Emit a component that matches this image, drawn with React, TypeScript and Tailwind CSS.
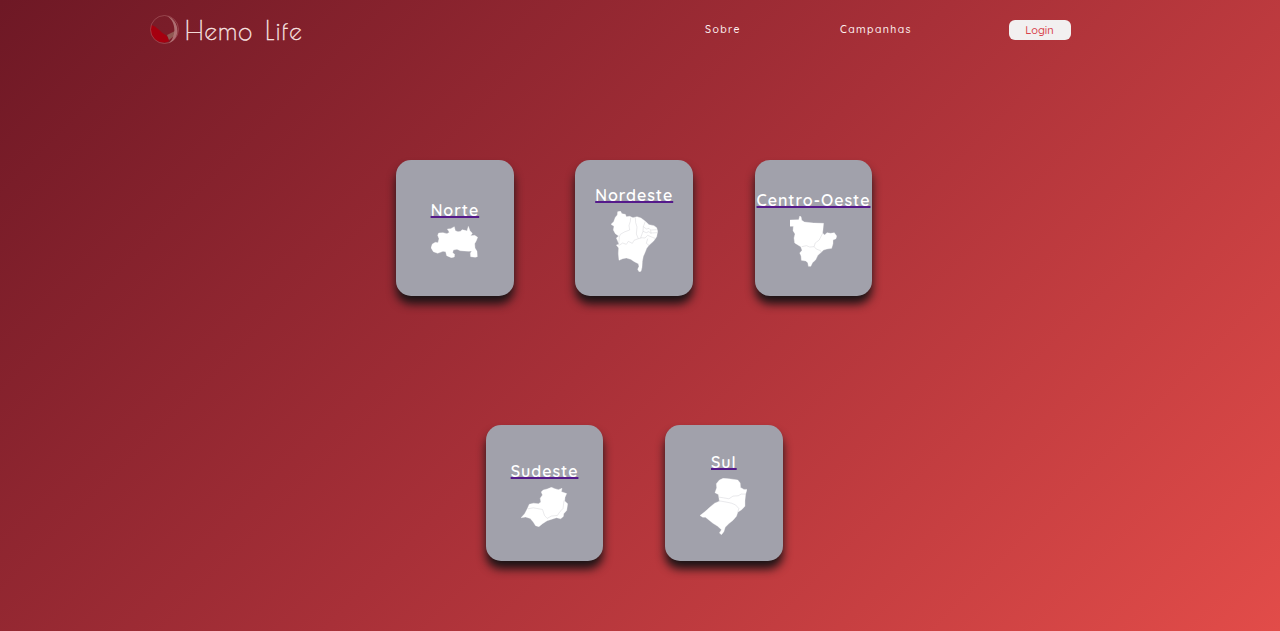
import React from "react";

type Region = {
  name: string;
  width: number;
  height: number;
  viewBox: string;
  outline: string;
  borders: string;
};

const rows: Region[][] = [
  [
    {
      name: "Norte",
      width: 47,
      height: 32,
      viewBox: "138 226 141 96",
      outline:
        "M138 291 L142 280 L151 275 L159 276 L162 264 L158 254 L161 247 L174 246 L186 249 L193 245 L187 235 L197 234 L208 228 L211 240 L219 243 L227 242 L231 237 L240 239 L246 241 L250 227 L255 240 L262 248 L257 255 L269 254 L278 260 L274 270 L269 279 L270 292 L276 302 L277 318 L271 320 L257 318 L256 308 L260 301 L251 302 L226 300 L216 296 L205 298 L203 306 L209 311 L208 319 L199 321 L185 315 L182 303 L174 302 L158 308 L145 303 Z",
      borders: "",
    },
    {
      name: "Nordeste",
      width: 47,
      height: 61,
      viewBox: "138 182 141 183",
      outline:
        "M138 222 L146 214 L151 201 L157 194 L158 184 L166 182 L171 190 L181 192 L184 199 L194 198 L204 202 L216 199 L228 203 L241 213 L252 223 L267 226 L275 232 L278 243 L275 259 L266 272 L252 285 L245 294 L241 304 L235 318 L232 333 L231 351 L228 363 L222 364 L218 357 L222 348 L220 340 L208 334 L197 327 L184 323 L173 325 L162 330 L160 310 L161 293 L154 284 L162 282 L157 270 L154 263 L161 257 L151 250 L145 239 L147 228 Z",
      borders:
        "M197 202 L196 213 L192 225 L194 239 L178 245 L166 252 L163 260 L161 282 M211 202 L212 217 L216 230 L214 251 L220 265 L207 270 L202 279 L190 273 L184 282 L173 278 L161 286 M241 213 L235 229 L244 236 L252 234 L257 239 L275 238 M235 229 L234 243 L244 247 L251 244 L257 248 L276 247 M234 243 L227 262 L240 263 L248 255 L262 261 L270 264 M220 265 L229 263 M248 265 L244 279 L252 285 M257 239 L258 250",
    },
    {
      name: "Centro-Oeste",
      width: 47,
      height: 51,
      viewBox: "135 198 140 153",
      outline:
        "M135 210 L161 209 L164 198 L168 200 L170 211 L178 216 L205 219 L235 220 L233 241 L232 249 L238 255 L245 248 L256 250 L267 248 L274 258 L272 266 L263 270 L263 281 L259 295 L245 297 L235 300 L228 307 L218 316 L211 330 L202 338 L197 349 L190 349 L188 338 L182 333 L169 331 L168 318 L164 309 L171 301 L167 290 L149 279 L147 264 L150 252 L144 242 L145 229 L135 229 Z",
      borders:
        "M170 290 L184 287 L194 291 L207 290 L210 279 L222 270 L232 250 M207 290 L213 297 L226 302 L228 307",
    },
  ],
  [
    {
      name: "Sudeste",
      width: 47,
      height: 40,
      viewBox: "137 213 142 121",
      outline:
        "M137 306 L148 294 L156 279 L162 265 L175 262 L190 264 L197 258 L195 247 L202 237 L198 228 L204 222 L216 219 L229 214 L239 218 L250 221 L261 217 L259 227 L275 233 L270 244 L269 255 L278 264 L275 284 L266 294 L265 302 L257 309 L244 306 L228 311 L216 315 L202 324 L191 333 L181 330 L174 319 L165 308 L151 304 Z",
      borders:
        "M158 279 L174 276 L191 279 L202 281 L208 299 L216 308 L229 301 L247 299 L255 287 L264 278 L267 254",
    },
    {
      name: "Sul",
      width: 47,
      height: 57,
      viewBox: "137 190 138 170",
      outline:
        "M181 234 L186 219 L185 207 L194 196 L205 191 L221 192 L248 196 L255 205 L256 218 L266 224 L275 224 L271 238 L269 257 L269 274 L260 284 L248 292 L244 304 L234 316 L222 326 L211 337 L207 350 L200 359 L194 354 L200 344 L189 334 L175 325 L164 316 L153 307 L145 307 L137 302 L151 291 L164 279 L180 265 L194 259 L191 239 Z",
      borders:
        "M192 247 L206 249 L222 252 L234 244 L249 243 L258 238 L270 238 M192 258 L210 261 L229 265 L241 270 L251 281 L248 292",
    },
  ],
];

function Logo() {
  return (
    <svg className="h-[30px] w-[30px] shrink-0" viewBox="0 0 30 30" aria-hidden="true">
      <defs>
        <clipPath id="drop">
          <circle cx="13.5" cy="14.5" r="13" />
        </clipPath>
      </defs>
      <g clipPath="url(#drop)">
        <path d="M0 10 C6 10 9 16 14 19 C18 21 20 24 18 30 L0 30Z" fill="#a5000f" />
        <path d="M17 20 L25 16 L24 21 L19 25Z" fill="#8f5952" />
      </g>
      <circle cx="14.5" cy="14.5" r="14" fill="none" stroke="#b76f74" strokeWidth="0.8" opacity="0.6" />
      <path d="M17 1 C30 5 31 24 19 28 C26 22 27 7 17 1Z" fill="#c08a8a" opacity="0.75" />
    </svg>
  );
}

function RegionCard({ region }: { region: Region }) {
  return (
    <a
      href="#"
      className="flex h-[136px] w-[117.5px] flex-col items-center justify-center rounded-[15px] bg-[#a1a1ab] shadow-[0_8px_10px_0px_#1c1416]"
    >
      <span
        className="h-[27px] whitespace-nowrap text-[16px] leading-[22px] font-semibold tracking-[0.97px] text-white underline decoration-[#551a8b] decoration-[1.5px] underline-offset-[0px] [text-decoration-skip-ink:none]"
      >
        {region.name}
      </span>
      <svg width={region.width} height={region.height} viewBox={region.viewBox} preserveAspectRatio="none" aria-hidden="true">
        <path d={region.outline} fill="#fff" stroke="#fff" strokeWidth="1" strokeLinejoin="round" />
        <path d={region.borders} fill="none" stroke="#c9c9cf" strokeWidth="1.2" />
      </svg>
    </a>
  );
}

export default function App() {
  return (
    <div className="flex h-screen flex-col overflow-hidden bg-[linear-gradient(135deg,#6e1825_0%,#a83038_50%,#e24c49_100%)] font-['Quicksand','Lato',sans-serif]">
      <header className="flex h-[60px] shrink-0 items-center pl-[150px]">
        <div className="flex w-[555px] items-center gap-[4px]">
          <Logo />
          <span className="pt-px pl-px font-['Poiret_One','Quicksand','Lato',sans-serif] text-[25px] leading-[30px] tracking-[1.15px] whitespace-nowrap text-[#fae6e4] [-webkit-text-stroke:0.35px_#fae6e4] [word-spacing:5.5px]">
            Hemo Life
          </span>
        </div>
        <a href="#" className="w-[135px] text-[10.5px] font-medium tracking-[1.4px] text-[#fff4f4]">
          Sobre
        </a>
        <a href="#" className="w-[168.5px] text-[10.5px] font-medium tracking-[1.4px] text-[#fff4f4]">
          Campanhas
        </a>
        <button className="h-5 w-[62px] rounded-[6px] bg-[#f2f0f0] text-[11px] leading-5 font-medium text-[#d8404a]">Login</button>
      </header>
      <main className="flex flex-col gap-[129.4px] pt-[100px] pr-[11.6px]">
        {rows.map((row, i) => (
          <div key={i} className="flex justify-center gap-[61.8px]">
            {row.map((region) => (
              <RegionCard key={region.name} region={region} />
            ))}
          </div>
        ))}
      </main>
    </div>
  );
}
